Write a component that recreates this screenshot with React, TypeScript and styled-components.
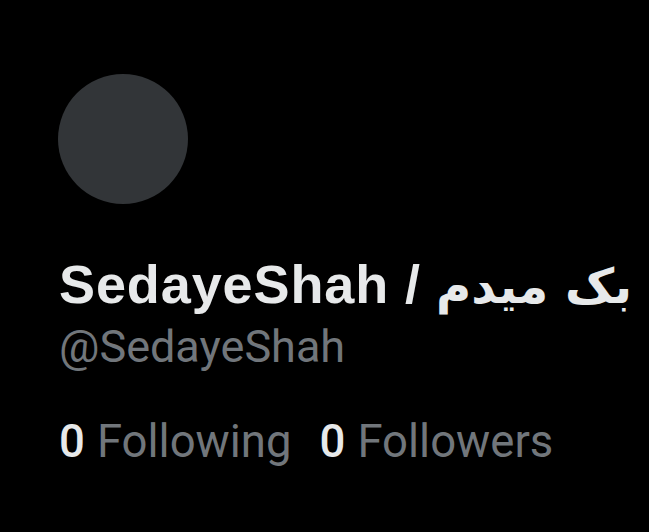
import React from 'react';
import styled, { createGlobalStyle } from 'styled-components';

const GlobalStyle = createGlobalStyle`
  html, body {
    margin: 0;
    padding: 0;
    background: #000;
  }
  body {
    font-family: Roboto, "DejaVu Sans", sans-serif;
    color: #e7e9ea;
  }
`;

const Page = styled.div`
  width: 649px;
  height: 532px;
  background: #000;
  padding: 74px 0 0 58px;
  box-sizing: border-box;
  overflow: hidden;
`;

const Avatar = styled.div`
  width: 130px;
  height: 130px;
  border-radius: 50%;
  background: #323538;
`;

const Info = styled.div`
  padding-left: 1px;
  margin-top: 48px;
  display: flex;
  flex-direction: column;
`;

const Name = styled.h1`
  margin: 0;
  font-family: "Liberation Sans", "DejaVu Sans", sans-serif;
  font-size: 54px;
  font-weight: 700;
  line-height: 64px;
  color: #e7e9ea;
  white-space: nowrap;
`;

const Latin = styled.span`
  letter-spacing: 0.9px;
`;

const Persian = styled.span`
  font-family: "DejaVu Sans", sans-serif;
  font-size: 48px;
`;

const Handle = styled.div`
  margin-top: 3px;
  font-size: 45px;
  line-height: 52px;
  color: #71767b;
`;

const Stats = styled.div`
  display: flex;
  gap: 28px;
  margin-top: 43px;
  font-size: 45.5px;
  line-height: 52px;
`;

const Stat = styled.span`
  display: inline-flex;
  gap: 12px;
  color: #71767b;
`;

const Count = styled.b`
  font-weight: 500;
  color: #e7e9ea;
`;

export default function App() {
  return (
    <>
      <GlobalStyle />
      <Page>
        <Avatar />
        <Info>
          <Name>
            <Latin>SedayeShah /</Latin> <Persian>بک میدم</Persian>
          </Name>
          <Handle>@SedayeShah</Handle>
          <Stats>
            <Stat>
              <Count>0</Count>Following
            </Stat>
            <Stat>
              <Count>0</Count>Followers
            </Stat>
          </Stats>
        </Info>
      </Page>
    </>
  );
}
